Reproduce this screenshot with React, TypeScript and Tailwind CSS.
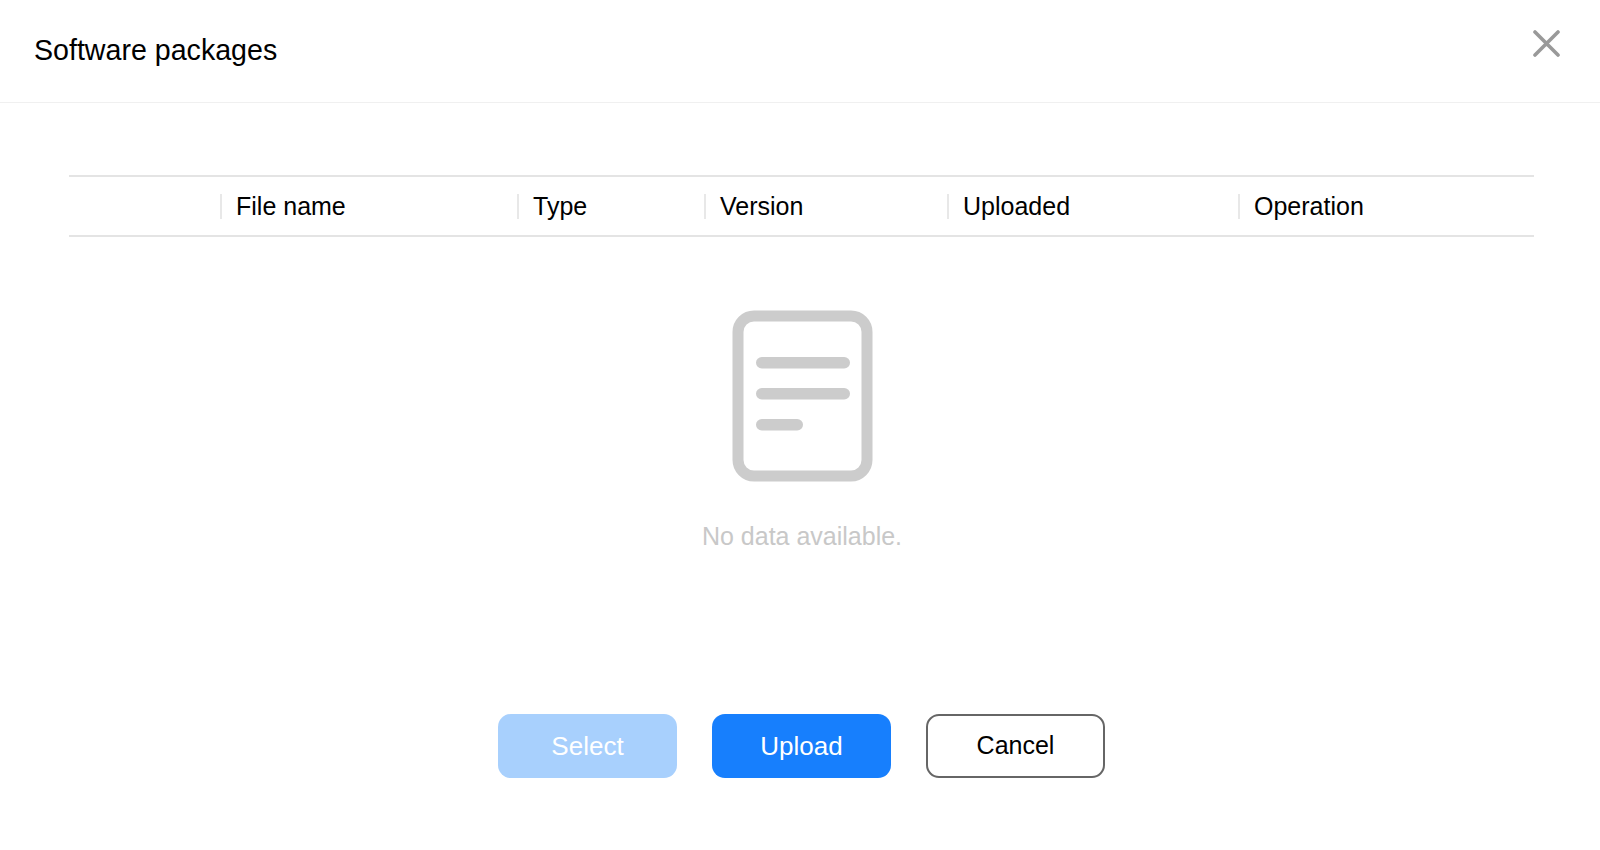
const columns = [
  { label: 'File name', width: 'w-[297px]' },
  { label: 'Type', width: 'w-[187px]' },
  { label: 'Version', width: 'w-[243px]' },
  { label: 'Uploaded', width: 'w-[291px]' },
  { label: 'Operation', width: 'flex-1' },
];

function EmptyIcon() {
  return (
    <svg width="143" height="172" viewBox="0 0 143 172" fill="none">
      <rect x="6" y="6" width="129" height="160" rx="16" stroke="#cccccc" strokeWidth="11" />
      <rect x="24" y="47" width="94" height="11.5" rx="5.75" fill="#cccccc" />
      <rect x="24" y="78" width="94" height="11.5" rx="5.75" fill="#cccccc" />
      <rect x="24" y="109" width="47" height="11.5" rx="5.75" fill="#cccccc" />
    </svg>
  );
}

export default function App() {
  return (
    <div className="h-[850px] w-[1600px] overflow-hidden bg-white font-['Liberation_Sans',Arial,sans-serif] text-black">
      <div className="flex h-[103px] items-center justify-between border-b border-[#f0f0f0] pl-[34px] pr-[40px]">
        <h1 className="mb-[2px] text-[28.6px] font-normal">Software packages</h1>
        <button className="mb-[15px] text-[#999999]">
          <svg width="27" height="27" viewBox="0 0 27 27" fill="none" stroke="currentColor" strokeWidth="3.6" strokeLinecap="round">
            <path d="M2 2L25 25M25 2L2 25" />
          </svg>
        </button>
      </div>

      <div className="mx-[69px] mt-[72px] flex h-[62px] w-[1465px] items-center border-y-2 border-[#e4e4e4] pl-[151px] text-[25px]">
        {columns.map((col) => (
          <div key={col.label} className={`${col.width} flex h-[25px] items-center border-l-2 border-[#e8e8e8] pl-[14px] pt-[1px]`}>
            {col.label}
          </div>
        ))}
      </div>

      <div className="mt-[73px] flex flex-col items-center">
        <div className="ml-[6px]">
          <EmptyIcon />
        </div>
        <p className="ml-[4px] mt-[38px] text-[25px] leading-[32px] text-[#c8c8c8]">No data available.</p>
      </div>

      <div className="mt-[162px] flex justify-center gap-[35px] pl-[3px] text-[26px]">
        <button className="h-[64px] w-[179px] rounded-[13px] bg-[#a8d0fd] text-white">Select</button>
        <button className="h-[64px] w-[179px] rounded-[13px] bg-[#177ffd] text-white">Upload</button>
        <button className="h-[64px] w-[179px] rounded-[13px] border-2 border-[#666666] bg-white text-[25px]">Cancel</button>
      </div>
    </div>
  );
}
